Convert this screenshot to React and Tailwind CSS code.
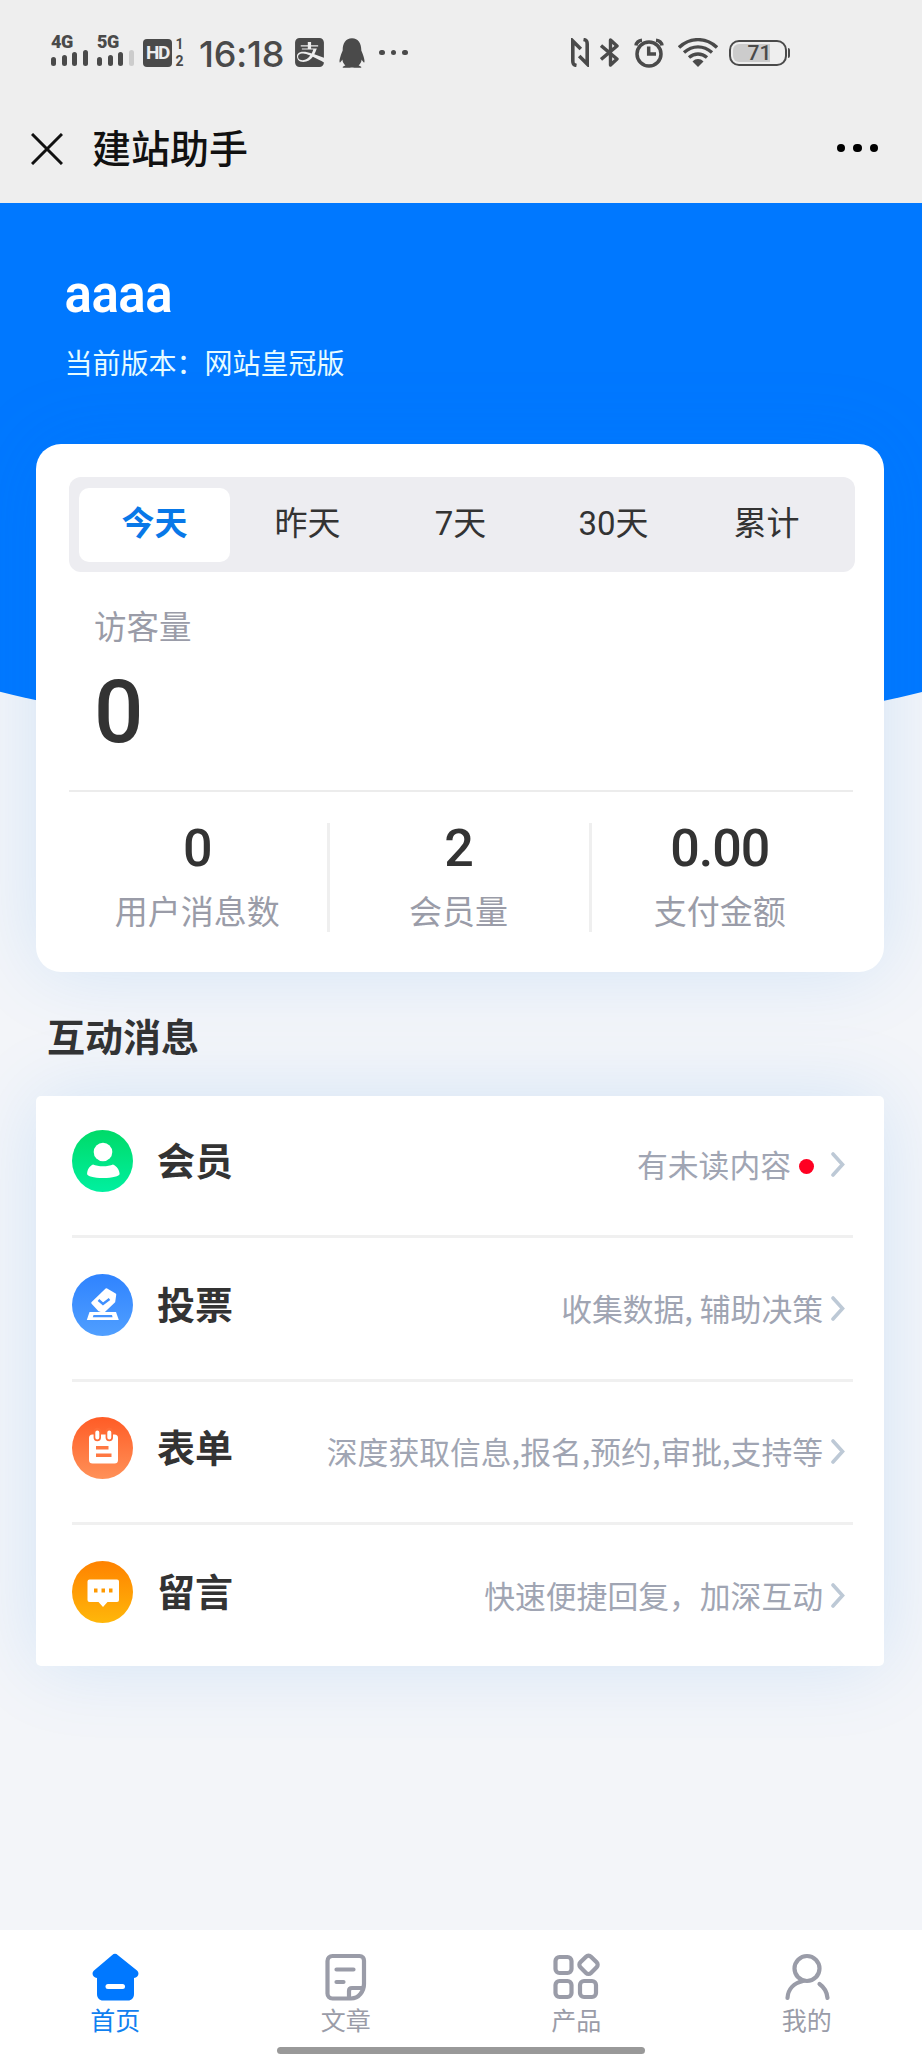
import { useState } from 'react'
import { FaAlipay, FaQq } from 'react-icons/fa'

const RANGES = ['今天', '昨天', '7天', '30天', '累计']

const STATS = [
  { label: '用户消息数', value: '0' },
  { label: '会员量', value: '2' },
  { label: '支付金额', value: '0.00' },
]

function MemberIcon() {
  return (
    <svg viewBox="0 0 61 62" className="w-[61px] h-[62px]">
      <defs>
        <linearGradient id="member" x1="0" y1="0" x2="0" y2="1">
          <stop offset="0" stopColor="#00da68" />
          <stop offset="1" stopColor="#00f0a0" />
        </linearGradient>
      </defs>
      <ellipse cx="30.5" cy="31" rx="30.5" ry="31" fill="url(#member)" />
      <circle cx="31" cy="22" r="9.3" fill="#fff" />
      <path d="M21 34.500c5 2.400 15 2.400 20 0 4 1.500 6.500 6 6.600 9.500 0 2-7 4-16.500 4s-16-2-16-4c0-3.500 2-8 5.900-9.500z" fill="#fff" />
    </svg>
  )
}

function VoteIcon() {
  return (
    <svg viewBox="0 0 61 62" className="w-[61px] h-[62px]">
      <defs>
        <linearGradient id="vote" x1="0" y1="0" x2="0" y2="1">
          <stop offset="0" stopColor="#2f83ff" />
          <stop offset="1" stopColor="#509fff" />
        </linearGradient>
      </defs>
      <ellipse cx="30.5" cy="31" rx="30.5" ry="31" fill="url(#vote)" />
      <path d="M34.500 15.500 43 20.500 42 27.500 31.500 37.500 27 36 20.500 29z" fill="#fff" stroke="#fff" strokeWidth="2.500" strokeLinejoin="round" />
      <path d="m26.500 26 4.500 4 6.500-5" fill="none" stroke="#3f90ff" strokeWidth="2.400" />
      <path d="M17.500 38h26.500l2.800 8H14.800z" fill="#fff" />
      <path d="M21.500 41h18.500l.6 2.300H20.800z" fill="#4594ff" />
    </svg>
  )
}

function FormIcon() {
  return (
    <svg viewBox="0 0 61 62" className="w-[61px] h-[62px]">
      <defs>
        <linearGradient id="form" x1="0" y1="0" x2="0" y2="1">
          <stop offset="0" stopColor="#ff5c26" />
          <stop offset="1" stopColor="#ff9158" />
        </linearGradient>
      </defs>
      <ellipse cx="30.5" cy="31" rx="30.5" ry="31" fill="url(#form)" />
      <rect x="17" y="17.500" width="29" height="29" rx="3.500" fill="#fff" />
      <g fill="none" strokeLinecap="round">
        <path d="M25.300 14.500v6M37.300 14.500v6" stroke="#ff6c36" strokeWidth="7.400" />
        <path d="M25.300 15.500v5M37.300 15.500v5" stroke="#fff" strokeWidth="4" />
      </g>
      <path d="M24 29h12.500v3.500H24zM24 36.500h15.500V40H24z" fill="#ff7842" />
    </svg>
  )
}

function MessageIcon() {
  return (
    <svg viewBox="0 0 61 62" className="w-[61px] h-[62px]">
      <defs>
        <linearGradient id="message" x1="0" y1="0" x2="0" y2="1">
          <stop offset="0" stopColor="#ff8200" />
          <stop offset="1" stopColor="#ffb70a" />
        </linearGradient>
      </defs>
      <ellipse cx="30.5" cy="31" rx="30.5" ry="31" fill="url(#message)" />
      <path d="M17.500 18.500h27.500a2 2 0 0 1 2 2v18.500a2 2 0 0 1-2 2H35.500l-4.500 5-4.500-5h-9a2 2 0 0 1-2-2V20.500a2 2 0 0 1 2-2z" fill="#fff" />
      <path d="M22 27.500h3.500v4H22zM29.500 27.500H33v4h-3.500zM37 27.500h3.500v4H37z" fill="#ff9900" />
    </svg>
  )
}

const MESSAGES = [
  { title: '会员', desc: '有未读内容', icon: MemberIcon, unread: true },
  { title: '投票', desc: '收集数据, 辅助决策', icon: VoteIcon },
  { title: '表单', desc: '深度获取信息,报名,预约,审批,支持等', icon: FormIcon },
  { title: '留言', desc: '快速便捷回复，加深互动', icon: MessageIcon },
]

function HomeIcon() {
  return (
    <svg viewBox="0 0 48 48" className="w-12 h-12">
      <path d="M21 2.200a4.500 4.500 0 0 1 6 0L46 17.500c3 3 1 7-3 7.500v16c0 4-2.500 6.500-6 6.500H12c-3.500 0-6-2.500-6-6.500V25c-4-.500-6-4.500-3-7.500z" fill="#0078ff" />
      <path d="M17 33.500h14.500" stroke="#fff" strokeWidth="5" strokeLinecap="round" />
    </svg>
  )
}

function ArticleIcon() {
  return (
    <svg viewBox="0 0 48 48" className="w-12 h-12" fill="none" stroke="#9a9ca8" strokeWidth="4.200" strokeLinecap="round" strokeLinejoin="round">
      <path d="M10.500 3h27c3 0 4.500 2 4.500 4.500V31c0 7-5 14.500-13 14.500H10.500c-3 0-5-2-5-5V8c0-3 2-5 5-5z" />
      <path d="M14.500 16.500h17M14.500 29h7" />
      <path d="M27 44.500V38c0-2 1-3 3-3h10.500" />
    </svg>
  )
}

function ProductIcon() {
  return (
    <svg viewBox="0 0 48 48" className="w-12 h-12" fill="none" stroke="#9a9ca8" strokeWidth="4.200" strokeLinejoin="round">
      <rect x="3.500" y="4" width="16" height="16" rx="4" />
      <rect x="3.500" y="28" width="16" height="16" rx="4" />
      <rect x="28" y="28" width="16" height="16" rx="4" />
      <rect x="29" y="4.300" width="15" height="15" rx="3.500" transform="rotate(45 36.500 11.800)" />
    </svg>
  )
}

function MineIcon() {
  return (
    <svg viewBox="0 0 48 48" className="w-12 h-12" fill="none" stroke="#9a9ca8" strokeWidth="4.200" strokeLinecap="round">
      <circle cx="24" cy="15.500" r="12.500" />
      <path d="M20 28C11 30 5 36 4.500 45M36.500 31c5 3.500 7.500 8 8 14" />
    </svg>
  )
}

const TABS = [
  { label: '首页', icon: HomeIcon },
  { label: '文章', icon: ArticleIcon },
  { label: '产品', icon: ProductIcon },
  { label: '我的', icon: MineIcon },
]

function Signal({ label, weak }) {
  return (
    <div className="w-[37px] flex flex-col">
      <span className="text-[18px] leading-[14px] font-black tracking-[-0.5px]">{label}</span>
      <div className="flex items-end justify-between h-[16px] mt-px">
        <i className="w-[5px] h-[9px] rounded-sm bg-[#4a4a4a]" />
        <i className="w-[5px] h-[11px] rounded-sm bg-[#4a4a4a]" />
        <i className="w-[5px] h-[14px] rounded-sm bg-[#4a4a4a]" />
        <i className={`w-[5px] h-[16px] rounded-sm ${weak ? 'bg-[#cccccc]' : 'bg-[#4a4a4a]'}`} />
      </div>
    </div>
  )
}

function StatusBar() {
  return (
    <div className="flex justify-between h-[105px] pl-[51px] pr-[132px] text-[#4a4a4a]">
      <div className="flex items-center">
        <div className="flex gap-[9px] mb-[5px]">
          <Signal label="4G" />
          <Signal label="5G" weak />
        </div>
        <div className="flex items-center justify-center w-[29px] h-[28px] ml-[9px] rounded bg-[#4a4a4a] text-[#eeeeee] text-[19px] leading-none font-bold tracking-[-1.500px]">HD</div>
        <div className="flex flex-col w-[11px] ml-[2px] text-[14px] leading-[17px] font-bold text-center">
          <span>1</span>
          <span>2</span>
        </div>
        <span className="w-[88px] ml-[14px] mt-[3px] font-['Inter',sans-serif] text-[36px] leading-none tracking-[-0.2px] font-medium whitespace-nowrap">16:18</span>
        <FaAlipay className="w-[29px] h-[33px] ml-[8px]" />
        <FaQq className="w-[26px] h-[30px] ml-[15px]" />
        <div className="flex gap-[6px] ml-[14px]">
          <i className="w-[5.500px] h-[5.500px] rounded-full bg-[#4a4a4a]" />
          <i className="w-[5.500px] h-[5.500px] rounded-full bg-[#4a4a4a]" />
          <i className="w-[5.500px] h-[5.500px] rounded-full bg-[#4a4a4a]" />
        </div>
      </div>

      <div className="flex items-center">
        <svg viewBox="0 0 18 29" className="w-[18px] h-[29px]" fill="none" stroke="#4a4a4a" strokeWidth="3.600">
          <path d="M5.500 27.500C2.500 27 1.800 26 1.800 23V3l8 8M12.500 1.500c3 .5 3.700 1.500 3.700 4.500v20l-8-8" />
        </svg>
        <svg viewBox="0 0 20 29" className="w-[20px] h-[29px] ml-[11px]" fill="none" stroke="#4a4a4a" strokeWidth="3.400" strokeLinejoin="round">
          <path d="m1 7.500 16 13.500-6.500 6V2L17 8 1 21.500" />
        </svg>
        <svg viewBox="0 0 30 30" className="w-[30px] h-[30px] ml-[14px]" fill="none" stroke="#4a4a4a" strokeWidth="3.500">
          <circle cx="15" cy="16" r="12" />
          <path d="M14.700 8.500v7.500H22" strokeWidth="3.500" />
          <path d="M2 7.500C2.500 4.500 4.500 2.500 8 2.200M28 7.500C27.500 4.500 25.500 2.500 22 2.200" />
        </svg>
        <svg viewBox="0 0 40 30" className="w-[40px] h-[30px] ml-[14px]" fill="none" stroke="#4a4a4a" strokeWidth="3.400">
          <path d="M1 9.500C12-1 28-1 39 9.500M6 14.500c8.500-7.500 19.500-7.500 28 0M11 19.500c5.500-4.700 12.500-4.700 18 0" />
          <path d="M14.500 23.500c3-3.300 8-3.300 11 0L20 29z" fill="#4a4a4a" stroke="none" />
        </svg>
        <div className="flex items-center w-[58px] h-[26px] ml-[11px] p-[2px] rounded-[10px] border-[2.500px] border-[#4a4a4a]">
          <div className="w-[37px] h-[18px] rounded-l-[6px] bg-[#cccccc]">
            <span className="block pl-[15px] text-[21px] leading-[18px] font-medium">71</span>
          </div>
        </div>
        <i className="w-[2.500px] h-[10px] ml-px rounded-r bg-[#4a4a4a]" />
      </div>
    </div>
  )
}

export default function App() {
  const [range, setRange] = useState('今天')
  const [tab, setTab] = useState('首页')

  return (
    <div className="w-[922px] h-[2056px] flex flex-col overflow-hidden bg-[#f3f5f9] font-['Roboto','Noto_Sans_CJK_SC',sans-serif] text-[#333333]">
      <header className="h-[203px] shrink-0 bg-[#eeeeee]">
        <StatusBar />
        <div className="flex items-center h-[88px] pl-[31px] pr-[44px] text-[#111111]">
          <svg viewBox="0 0 32 32" className="w-8 h-8 mb-px" stroke="#111" strokeWidth="3">
            <path d="m1 1 30 30M31 1 1 31" />
          </svg>
          <h1 className="mt-[3px] ml-[29px] text-[39px] leading-none font-medium">建站助手</h1>
          <div className="flex gap-[8px] ml-auto mb-[2px]">
            <i className="w-[8.500px] h-[8.500px] rounded-full bg-black" />
            <i className="w-[8.500px] h-[8.500px] rounded-full bg-black" />
            <i className="w-[8.500px] h-[8.500px] rounded-full bg-black" />
          </div>
        </div>
      </header>

      {/* 蓝色弧形背景 */}
      <section className="h-[538px] shrink-0 flex justify-center overflow-hidden">
        <div className="w-[1383px] h-full shrink-0 pl-[295px] pt-[64px] rounded-b-[50%_193px] bg-[#0078ff] text-white">
          <h2 className="text-[51px] leading-[56px] font-semibold tracking-[-0.5px]">aaaa</h2>
          <p className="mt-[22px] text-[28px] leading-[40px] text-[#e6fbff]">当前版本：网站皇冠版</p>
        </div>
      </section>

      {/* 数据统计 */}
      <section className="relative w-[848px] h-[528px] shrink-0 -mt-[297px] ml-9 pt-[33px] pl-[33px] pr-[31px] rounded-[25px] bg-white shadow-[0_0_80px_rgba(0,120,230,0.13)]">
        <div className="flex gap-[2px] w-[786px] h-[95px] pt-[11px] pl-[10px] rounded-xl bg-[#ededf1]">
          {RANGES.map((item) => (
            <button
              key={item}
              onClick={() => setRange(item)}
              className={`w-[151px] h-[74px] pb-1 rounded-[10px] text-[33px] leading-none ${
                range === item ? 'bg-white text-[#0878e8] font-bold' : ''
              }`}
            >
              {item}
            </button>
          ))}
        </div>
        <div className="h-[220px] pt-[35px] pl-[25px] border-b-2 border-[#ececec]">
          <p className="text-[32.500px] leading-[42px] text-[#9a9ca8]">访客量</p>
          <p className="mt-[19px] text-[87px] leading-[88px] font-medium">0</p>
        </div>
        <div className="flex mt-[31px] w-[781px] h-[109px]">
          {STATS.map((item) => (
            <div key={item.label} className="flex-1 pr-[2px] text-center border-r-[3px] border-[#efefef] last:border-r-0">
              <p className="text-[52px] leading-[52px] font-medium tracking-[-1px]">{item.value}</p>
              <p className="mt-[17px] text-[33px] leading-[42px] text-[#9a9ca8]">{item.label}</p>
            </div>
          ))}
        </div>
      </section>

      <h3 className="mt-[42px] ml-[47px] text-[38px] leading-[48px] font-bold">互动消息</h3>

      {/* 消息列表 */}
      <section className="w-[848px] h-[570px] shrink-0 mt-[34px] ml-9 pl-9 pr-[31px] rounded-[5px] bg-white shadow-[0_0_80px_rgba(0,120,230,0.13)]">
        {MESSAGES.map((item) => (
          <div key={item.title} className="flex items-start h-[143.500px] first:h-[142px] pt-[35.500px] first:pt-[34px] border-b-[3px] border-[#f0f0f0] last:border-b-0">
            <item.icon />
            <span className="ml-[24px] mt-px text-[38px] leading-[62px] font-bold">{item.title}</span>
            <span className="ml-auto mt-[3px] font-['Noto_Sans_CJK_SC',sans-serif] text-[30.800px] leading-[62px] text-[#a0a5b3]">{item.desc}</span>
            {item.unread && <i className="w-[15px] h-[15px] mt-[29px] ml-[8px] mr-[9px] rounded-full bg-[#ff0022]" />}
            <svg viewBox="0 0 14 25" className="w-[14px] h-[25px] mt-[22px] ml-[8px] mr-[8px]" fill="none" stroke="#bdc9d6" strokeWidth="3.600" strokeLinecap="round">
              <path d="m2 2 9.500 10.500L2 23" />
            </svg>
          </div>
        ))}
      </section>

      {/* 底部导航 */}
      <nav className="relative h-[126px] shrink-0 mt-auto grid grid-cols-4 bg-white">
        {TABS.map((item) => (
          <button key={item.label} onClick={() => setTab(item.label)} className="flex flex-col items-center pt-[23px]">
            <item.icon />
            <span className={`mt-[5px] text-[25px] leading-[32px] ${tab === item.label ? 'text-[#1080f0]' : 'text-[#9a9ca8]'}`}>{item.label}</span>
          </button>
        ))}
        <div className="absolute left-[277px] bottom-[2px] w-[368px] h-[7px] rounded-sm bg-[#999999]" />
      </nav>
    </div>
  )
}
